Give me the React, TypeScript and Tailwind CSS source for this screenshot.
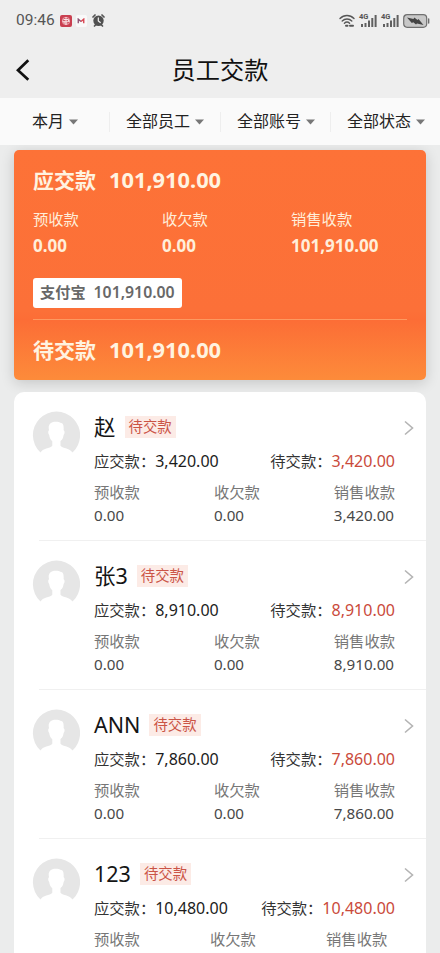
import type { ReactNode } from 'react'

interface Employee {
  name: string
  due: string
  pending: string
}

const FILTERS = [
  { label: '本月', pad: 'pl-[32px]' },
  { label: '全部员工', pad: 'pl-[16px]' },
  { label: '全部账号', pad: 'pl-[16px]' },
  { label: '全部状态', pad: 'pl-[16px]' },
]

const EMPLOYEES: Employee[] = [
  { name: '赵', due: '3,420.00', pending: '3,420.00' },
  { name: '张3', due: '8,910.00', pending: '8,910.00' },
  { name: 'ANN', due: '7,860.00', pending: '7,860.00' },
  { name: '123', due: '10,480.00', pending: '10,480.00' },
]

// ── Status bar icons ──────────────────────────────────────────────────────────
function AlarmIcon() {
  return (
    <svg width="13" height="13" viewBox="0 0 13 13">
      <path d="M1 3 3 1M12 3l-2-2M2.5 12l1-1M10.5 12l-1-1" stroke="#555" strokeWidth="1.7" strokeLinecap="round" />
      <circle cx="6.5" cy="6.7" r="5.2" fill="#505050" />
      <path d="M6.3 3.9v3l2 1.6" fill="none" stroke="#f4f4f4" strokeWidth="1.2" strokeLinecap="round" />
    </svg>
  )
}

function WifiIcon() {
  return (
    <svg width="16" height="14" viewBox="0 0 16 14" fill="none" stroke="#565656" strokeWidth="1.4" strokeLinecap="round">
      <path d="M1 4.5C5 .5 11 .5 15 4.5M3.2 7c2.7-2.6 6.9-2.6 9.6 0M5.4 9.3c1.5-1.4 3.7-1.4 5.2 0" />
      <path d="M7 11.8h1.5M11 11.8h3" strokeWidth="2" />
    </svg>
  )
}

function SignalIcon() {
  return (
    <span className="relative block h-[14px] w-[18px]">
      <span className="absolute -top-px left-0 font-['Roboto',sans-serif] text-[7.5px] leading-[8px] font-bold text-[#555]">4G</span>
      <svg className="absolute inset-0" width="18" height="14" viewBox="0 0 18 14" fill="#606060">
        <rect x="2" y="10" width="2" height="3" />
        <rect x="5.5" y="9" width="2" height="4" />
        <rect x="9" y="6.5" width="2" height="6.5" />
        <rect x="12.3" y="4" width="2" height="9" />
        <rect x="15.6" y="1" width="2" height="12" />
      </svg>
    </span>
  )
}

function BatteryIcon() {
  return (
    <svg width="27" height="14" viewBox="0 0 27 14">
      <rect x=".7" y=".7" width="23" height="12.6" rx="3.5" fill="#c8c8c8" stroke="#707070" strokeWidth="1.2" />
      <path d="M25.7 5v4" stroke="#666" strokeWidth="1.3" strokeLinecap="round" />
      <path d="M4 3.5 10.5 5l.8-1.6L14.5 6l1-1 5 6-6.500-1.600-1 1.100-2.700-2.300-1.500.8z" fill="#444" />
    </svg>
  )
}

function StatusBar() {
  return (
    <div className="flex h-[41px] shrink-0 items-center pl-[16px] pr-[10px] font-['Roboto',sans-serif]">
      <span className="pt-px text-[15.5px] leading-none text-[#555]">09:46</span>
      <span className="ml-[5px] flex size-3 items-center justify-center rounded-[2px] bg-[#c93f50]">
        <svg width="10" height="10" viewBox="0 0 10 10" fill="none" stroke="#fbe3e5" strokeWidth="1">
          <path d="M5 1v8M2.500 3.500h5v2M1.500 5.300h7M3 5.300v1.700h3.500" />
          <circle cx="5" cy="5" r="3.7" strokeWidth=".6" />
        </svg>
      </span>
      <span className="ml-[4px] flex h-3 w-[11px] items-center justify-center rounded-[2px] bg-[#f9f9f9]">
        <svg width="8" height="6" viewBox="0 0 9 7" fill="none" strokeWidth="1.6">
          <path d="M1.300 6.200V1.300L4.500 4" stroke="#8c5374" />
          <path d="M4.500 4 7.700 1.300v4.900" stroke="#d84450" />
        </svg>
      </span>
      <span className="ml-[5px]"><AlarmIcon /></span>
      <div className="ml-auto flex items-center">
        <WifiIcon />
        <span className="ml-[4px]"><SignalIcon /></span>
        <span className="ml-[4px]"><SignalIcon /></span>
        <span className="ml-[4px]"><BatteryIcon /></span>
      </div>
    </div>
  )
}

// ── Header ────────────────────────────────────────────────────────────────────
function Header() {
  return (
    <header className="grid h-[57px] shrink-0 grid-cols-[1fr_auto_1fr] items-center">
      <button className="ml-[15px] w-4" aria-label="返回">
        <svg width="16" height="22" viewBox="0 0 16 22" fill="none" stroke="#111" strokeWidth="2.7">
          <path d="M13.300 1.300 3 11.200l10.300 9.500" />
        </svg>
      </button>
      <h1 className="pt-[2px] text-[24.2px] leading-none text-[#111]">员工交款</h1>
    </header>
  )
}

function FilterBar() {
  return (
    <nav className="grid h-[47px] shrink-0 grid-cols-[109px_111px_110px_110px] content-center bg-[#fafafa]">
      {FILTERS.map((f, i) => (
        <button
          key={f.label}
          className={`flex h-5 items-center gap-[5px] text-[16px] leading-none whitespace-nowrap text-[#222] ${f.pad} ${i > 0 ? 'border-l border-[#eeeeee]' : ''}`}
        >
          <span className="pb-px">{f.label}</span>
          <svg className="shrink-0" width="9" height="6" viewBox="0 0 9 6" fill="#777">
            <path d="M0 .5h9L4.500 5.500z" />
          </svg>
        </button>
      ))}
    </nav>
  )
}

// ── Summary card ──────────────────────────────────────────────────────────────
function SummaryTotal({ label, value }: { label: string; value: string }) {
  return (
    <div className="flex items-center gap-[13px] font-bold text-[#fff3e0]">
      <span className="text-[21px] leading-[30px]">{label}</span>
      <span className="pt-px text-[21.8px] leading-[30px]">{value}</span>
    </div>
  )
}

function SummaryCard() {
  const items = [
    { label: '预收款', value: '0.00' },
    { label: '收欠款', value: '0.00' },
    { label: '销售收款', value: '101,910.00' },
  ]
  return (
    <section className="h-[230px] rounded-[5px] bg-[linear-gradient(180deg,#fd7237_0%,#fc7038_70%,#fc6d36_74%,#fd8b3a_100%)] px-[19px] pt-[14px] shadow-[0_3px_14px_rgba(0,0,0,0.16)]">
      <SummaryTotal label="应交款" value="101,910.00" />
      <div className="mt-[11px] grid grid-cols-[129px_129px_1fr]">
        {items.map(item => (
          <div key={item.label} className="text-[#ffeeda]">
            <div className="text-[15.3px] leading-[26px]">{item.label}</div>
            <div className="text-[17px] leading-[27px] font-bold">{item.value}</div>
          </div>
        ))}
      </div>
      <div className="mt-[19px] flex h-[30px] w-[149px] items-center gap-2 rounded-[3px] bg-white pl-[7px] text-[#686868]">
        <span className="text-[15.2px] leading-none font-bold">支付宝</span>
        <span className="text-[15.8px] leading-none font-semibold">101,910.00</span>
      </div>
      <div className="mt-[11px] border-t border-[#fd9a60] pt-[14px]">
        <SummaryTotal label="待交款" value="101,910.00" />
      </div>
    </section>
  )
}

// ── Employee list ─────────────────────────────────────────────────────────────
function Avatar() {
  return (
    <svg className="mt-[18px] shrink-0" width="48" height="48" viewBox="0 0 48 48">
      <path
        d="M8.500 42.500A23.600 23.600 0 1 1 40.500 42.500C38 38.500 31 38.500 28.500 35.800V31C30.800 29.500 31.300 27 31.600 25C33 23.500 32.800 20.700 31.600 20.300C32 15 31 13.200 29 13C26.500 11.200 20 11 18 13.800C16.300 16 16.600 18 17 20.300C15.800 21 16 23.500 17.200 25C17.400 27.500 18.500 30 20.300 31.200V35.800C18 38.500 10.500 38.500 8.500 42.500Z"
        fill="#e6e6e6"
      />
    </svg>
  )
}

function Amount({ label, children }: { label: string; children: ReactNode }) {
  return (
    <div className="flex">
      <span>{label}：</span>
      <span className="text-[16px]">{children}</span>
    </div>
  )
}

function Detail({ label, children }: { label: string; children: ReactNode }) {
  return (
    <div>
      <div className="text-[15.3px] leading-[23px] text-[#777]">{label}</div>
      <div className="text-[15.2px] leading-[23px] text-[#484848]">{children}</div>
    </div>
  )
}

function EmployeeRow({ employee }: { employee: Employee }) {
  return (
    <li className="group relative flex h-[149px] pl-[18px]">
      <Avatar />
      <div className="ml-[14px] w-[301px] shrink-0 pt-[20px]">
        <div className="flex h-[30px] items-center gap-[9px]">
          <span className="text-[21.5px] leading-none text-[#151515]">{employee.name}</span>
          <span className="flex h-[22px] items-center bg-[#fcebe6] px-[4px] text-[14.4px] leading-none text-[#cb5446]">待交款</span>
        </div>
        <div className="mt-[7px] flex justify-between text-[15.3px] leading-6 text-[#333]">
          <Amount label="应交款"><span className="text-[#1c1c1c]">{employee.due}</span></Amount>
          <Amount label="待交款"><span className="text-[#ca4a3b]">{employee.pending}</span></Amount>
        </div>
        <div className="mt-[8px] flex justify-between">
          <Detail label="预收款">0.00</Detail>
          <Detail label="收欠款">0.00</Detail>
          <Detail label="销售收款">{employee.due}</Detail>
        </div>
      </div>
      <svg className="mt-[28px] ml-[8px] shrink-0" width="12" height="16" viewBox="0 0 12 16" fill="none" stroke="#b4b4b4" strokeWidth="1.6">
        <path d="M2 1.500 9.500 8 2 14.500" />
      </svg>
      <span className="absolute right-0 bottom-0 left-[25px] h-px bg-[#f0f0f0] group-last:hidden" />
    </li>
  )
}

export default function App() {
  return (
    <div className="flex h-[953px] w-[440px] flex-col overflow-hidden bg-[#eeeeee] font-['Noto_Sans','Noto_Sans_CJK_SC',sans-serif]">
      <StatusBar />
      <Header />
      <FilterBar />
      <main className="min-h-0 flex-1 overflow-hidden bg-[#ebecec] px-[14px] pt-[5px]">
        <SummaryCard />
        <ul className="relative mt-3 rounded-t-[10px] bg-white">
          {EMPLOYEES.map(e => <EmployeeRow key={e.name} employee={e} />)}
        </ul>
      </main>
    </div>
  )
}
